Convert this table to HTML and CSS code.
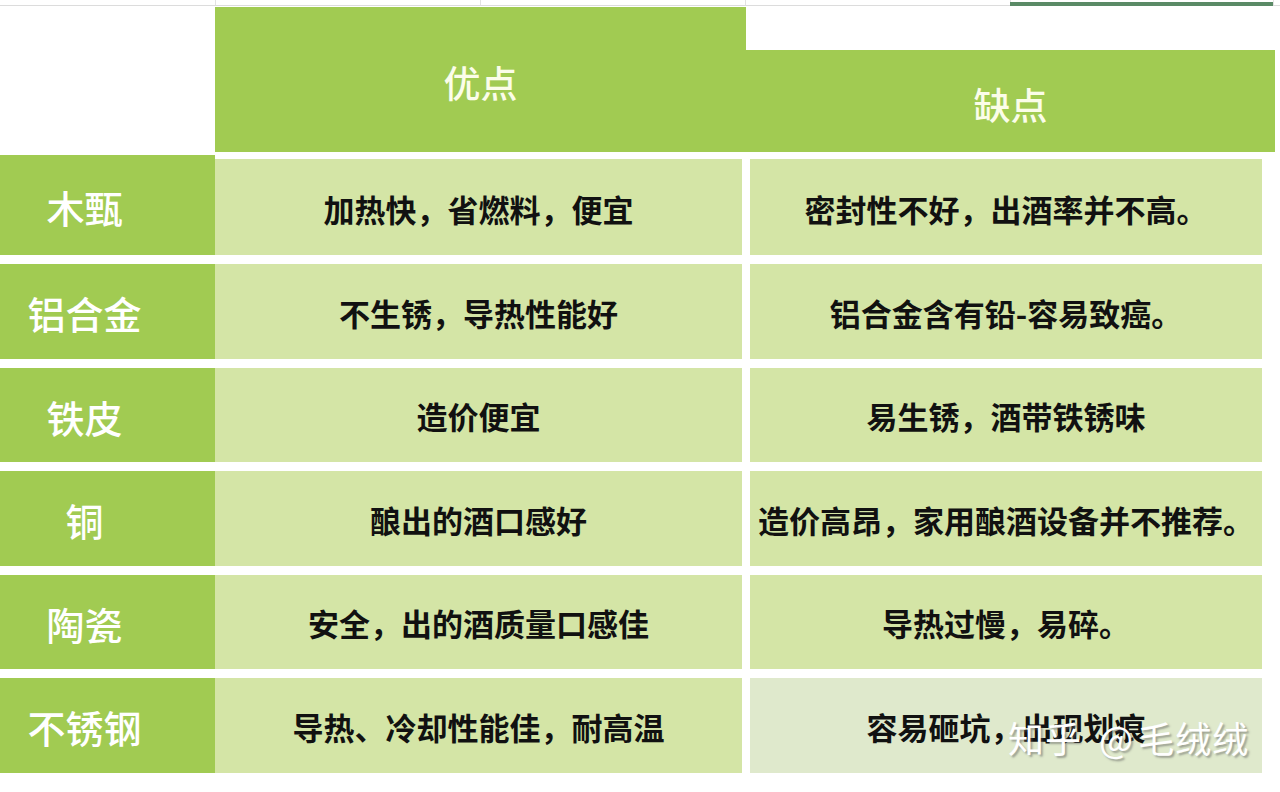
FILE: index.html
```html
<!DOCTYPE html>
<html lang="zh-CN">
<head>
<meta charset="utf-8">
<title>甑锅材质优缺点</title>
<link rel="stylesheet" href="styles.css">
</head>
<body>
<div class="strip">
  <div class="strip-cell w215"></div>
  <div class="strip-cell w265"></div>
  <div class="strip-cell w265"></div>
  <div class="strip-cell w265"></div>
  <div class="strip-cell w265 selected"></div>
  <div class="strip-cell rest"></div>
</div>
<div class="header">
  <div class="header-spacer"></div>
  <div class="head head-pro">优点</div>
  <div class="head head-con">缺点</div>
</div>
<div class="table">
  <div class="name first">木甄</div>
  <div class="cell">加热快，省燃料，便宜</div>
  <div class="cell">密封性不好，出酒率并不高。</div>

  <div class="name">铝合金</div>
  <div class="cell">不生锈，导热性能好</div>
  <div class="cell">铝合金含有铅-容易致癌。</div>

  <div class="name">铁皮</div>
  <div class="cell">造价便宜</div>
  <div class="cell">易生锈，酒带铁锈味</div>

  <div class="name">铜</div>
  <div class="cell">酿出的酒口感好</div>
  <div class="cell">造价高昂，家用酿酒设备并不推荐。</div>

  <div class="name">陶瓷</div>
  <div class="cell">安全，出的酒质量口感佳</div>
  <div class="cell">导热过慢，易碎。</div>

  <div class="name">不锈钢</div>
  <div class="cell">导热、冷却性能佳，耐高温</div>
  <div class="cell pale">容易砸坑，出现划痕<span class="watermark">知乎 <span class="at">@</span>毛绒绒</span></div>
</div>
</body>
</html>
```
FILE: styles.css
```css
html, body {
  margin: 0;
  padding: 0;
  background: #ffffff;
}
body {
  width: 1280px;
  height: 792px;
  overflow: hidden;
  font-family: "Noto Sans CJK SC", "Noto Sans", sans-serif;
}
.strip {
  display: flex;
  height: 5px;
  border-bottom: 1px solid #dcdcdc;
}
.strip-cell {
  box-sizing: border-box;
  border-right: 1px solid #e2e2e2;
  position: relative;
}
.w215 { width: 216px; }
.w265 { width: 265px; }
.rest { flex: 1; border-right: none; }
.selected { width: 264px; margin-left: -1px; }
.selected::after {
  content: "";
  position: absolute;
  left: 0;
  right: 0;
  top: 2px;
  height: 4px;
  background: #5a8a66;
}
.header {
  display: flex;
  align-items: flex-end;
  height: 145px;
  margin-top: 1px;
}
.header-spacer { width: 215px; }
.head {
  display: flex;
  align-items: center;
  justify-content: center;
  background: #a1cb52;
  color: #fbfde9;
  font-size: 37px;
  font-weight: 500;
}
.head-pro {
  width: 531px;
  height: 145px;
  padding-top: 4px;
  box-sizing: border-box;
}
.head-con {
  width: 529px;
  height: 102px;
  padding-top: 6px;
  box-sizing: border-box;
}
.table {
  display: grid;
  grid-template-columns: 215px 527px 520px;
  grid-template-rows: 96px repeat(5, 94.5px);
  column-gap: 0;
  row-gap: 9px;
  margin-top: 7px;
}
.name {
  background: #a1cb52;
  color: #ffffff;
  font-size: 38px;
  font-weight: 500;
  display: flex;
  align-items: center;
  justify-content: center;
  padding-right: 46px;
  padding-top: 3px;
}
.name.first { margin-top: -4px; }
.cell {
  background: #d4e5a6;
  color: #111111;
  font-size: 31px;
  font-weight: 700;
  display: flex;
  align-items: center;
  justify-content: center;
  padding-top: 2px;
  white-space: nowrap;
  position: relative;
}
.cell:nth-child(3n) { margin-left: 8px; }
.cell.pale { background: #dfe9cc; }
.watermark {
  position: absolute;
  left: 258px;
  top: 33px;
  color: #ffffff;
  font-size: 36px;
  font-weight: 400;
  text-shadow: 2px 2px 2px rgba(90, 90, 90, 0.5);
  letter-spacing: 1px;
  word-spacing: 8px;
}
.watermark .at {
  margin-right: 4px;
}
```
